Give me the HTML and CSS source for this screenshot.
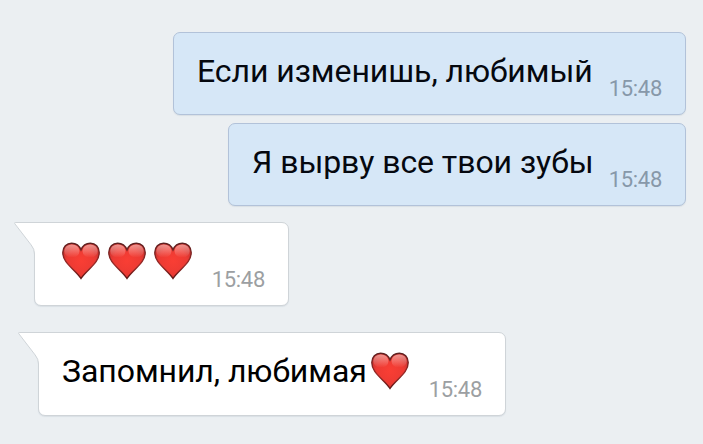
FILE: index.html
```
<!DOCTYPE html>
<html lang="ru">
<head>
  <meta charset="UTF-8" />
  <meta name="viewport" content="width=device-width, initial-scale=1.0" />
  <title>Чат</title>
  <link rel="stylesheet" href="styles.css">
</head>
<body>
  <svg width="0" height="0" class="defs">
    <defs>
      <radialGradient id="heart-fill" cx="0.5" cy="0.5" r="0.58">
        <stop offset="0" stop-color="#f93e34" />
        <stop offset="0.65" stop-color="#ec3a33" />
        <stop offset="1" stop-color="#c8322f" />
      </radialGradient>
      <linearGradient id="heart-line" x1="0" y1="0" x2="0" y2="1">
        <stop offset="0" stop-color="#5c2020" />
        <stop offset="0.6" stop-color="#9a2a27" />
        <stop offset="1" stop-color="#5e1715" />
      </linearGradient>
      <linearGradient id="heart-shine" x1="0" y1="0" x2="0" y2="1">
        <stop offset="0" stop-color="#ffd9d4" stop-opacity="0.6" />
        <stop offset="1" stop-color="#ffd9d4" stop-opacity="0" />
      </linearGradient>
      <symbol id="heart" viewBox="0 0 38 38">
        <path d="M19 36.5C17.6 34.2 14.5 30.8 10.5 26.9C5.5 22 .8 17.3 .8 10.4C.8 4.9 4.6 1.2 9.6 1.2C14.2 1.2 17.4 3.7 19 7.9C20.6 3.7 23.8 1.2 28.4 1.2C33.4 1.2 37.2 4.9 37.2 10.4C37.2 17.3 32.5 22 27.5 26.9C23.5 30.8 20.4 34.2 19 36.5Z" fill="url(#heart-fill)" stroke="url(#heart-line)" stroke-width="1.4" />
        <ellipse cx="9.9" cy="9" rx="7.6" ry="6.6" fill="url(#heart-shine)" />
        <ellipse cx="28.1" cy="9" rx="7.6" ry="6.6" fill="url(#heart-shine)" />
      </symbol>
    </defs>
  </svg>

  <div class="chat">
    <div class="msg out first">
      <span class="text">Если изменишь, любимый</span>
      <span class="time">15:48</span>
    </div>

    <div class="msg out second">
      <span class="text">Я вырву все твои зубы</span>
      <span class="time">15:48</span>
    </div>

    <div class="msg in hearts">
      <svg class="tail" width="24" height="36" viewBox="0 0 24 36">
        <path d="M24 .5H1.2Q.2 .5 .8 1.7L17.2 23Q20.5 27 20.5 32V36H24Z" fill="#fff" />
        <path d="M24 .5H1.2Q.2 .5 .8 1.7L17.2 23Q20.5 27 20.5 32V36" fill="none" stroke="#cfd4d8" />
      </svg>
      <span class="text">
        <svg class="heart"><use href="#heart" /></svg>
        <svg class="heart"><use href="#heart" /></svg>
        <svg class="heart"><use href="#heart" /></svg>
      </span>
      <span class="time">15:48</span>
    </div>

    <div class="msg in last">
      <svg class="tail" width="24" height="36" viewBox="0 0 24 36">
        <path d="M24 .5H1.2Q.2 .5 .8 1.7L17.2 23Q20.5 27 20.5 32V36H24Z" fill="#fff" />
        <path d="M24 .5H1.2Q.2 .5 .8 1.7L17.2 23Q20.5 27 20.5 32V36" fill="none" stroke="#cfd4d8" />
      </svg>
      <span class="text">Запомнил, любимая<svg class="heart"><use href="#heart" /></svg></span>
      <span class="time">15:48</span>
    </div>
  </div>
</body>
</html>
```
FILE: styles.css
```
body {
  margin: 0;
  background-color: #ebeff2;
  font-family: Roboto, "Liberation Sans", sans-serif;
}

.defs {
  display: block;
}

.chat {
  display: flex;
  flex-direction: column;
  height: 444px;
  padding: 32px 17px 0 34px;
  box-sizing: border-box;
}

.msg {
  position: relative;
  display: flex;
  justify-content: space-between;
  align-items: flex-start;
  height: 83px;
  padding: 22px 23px 0;
  box-sizing: border-box;
  border: 1px solid #b2c2d9;
  border-radius: 7px;
  box-shadow: 0 1px 1px rgba(120, 140, 160, 0.15);
}

.out {
  align-self: flex-end;
  background-color: #d6e7f7;
}

.in {
  align-self: flex-start;
  height: 84px;
  background-color: #fff;
  border-color: #cfd4d8;
  border-top-left-radius: 0;
}

.first {
  width: 513px;
}

.second {
  width: 458px;
  margin-top: 8px;
}

.hearts {
  width: 255px;
  margin-top: 16px;
  padding-left: 27px;
}

.last {
  width: 468px;
  margin-top: 26px;
  margin-left: 4px;
}

.text {
  display: flex;
  font-size: 32px;
  line-height: 32px;
  letter-spacing: -0.06px;
  color: #05080f;
  white-space: nowrap;
}

.in .text {
  color: #000;
}

.hearts .text {
  gap: 8px;
}

.time {
  margin-top: 22px;
  font-size: 22px;
  line-height: 24px;
  letter-spacing: -0.3px;
  color: #8798a9;
}

.in .time {
  margin-top: 23px;
  color: #9c9fa2;
}

.heart {
  width: 38px;
  height: 38px;
  margin-top: -3px;
}

.last .heart {
  margin-left: 4px;
}

/* corner that points at the sender */
.tail {
  position: absolute;
  top: -1px;
  left: -21px;
}
```
